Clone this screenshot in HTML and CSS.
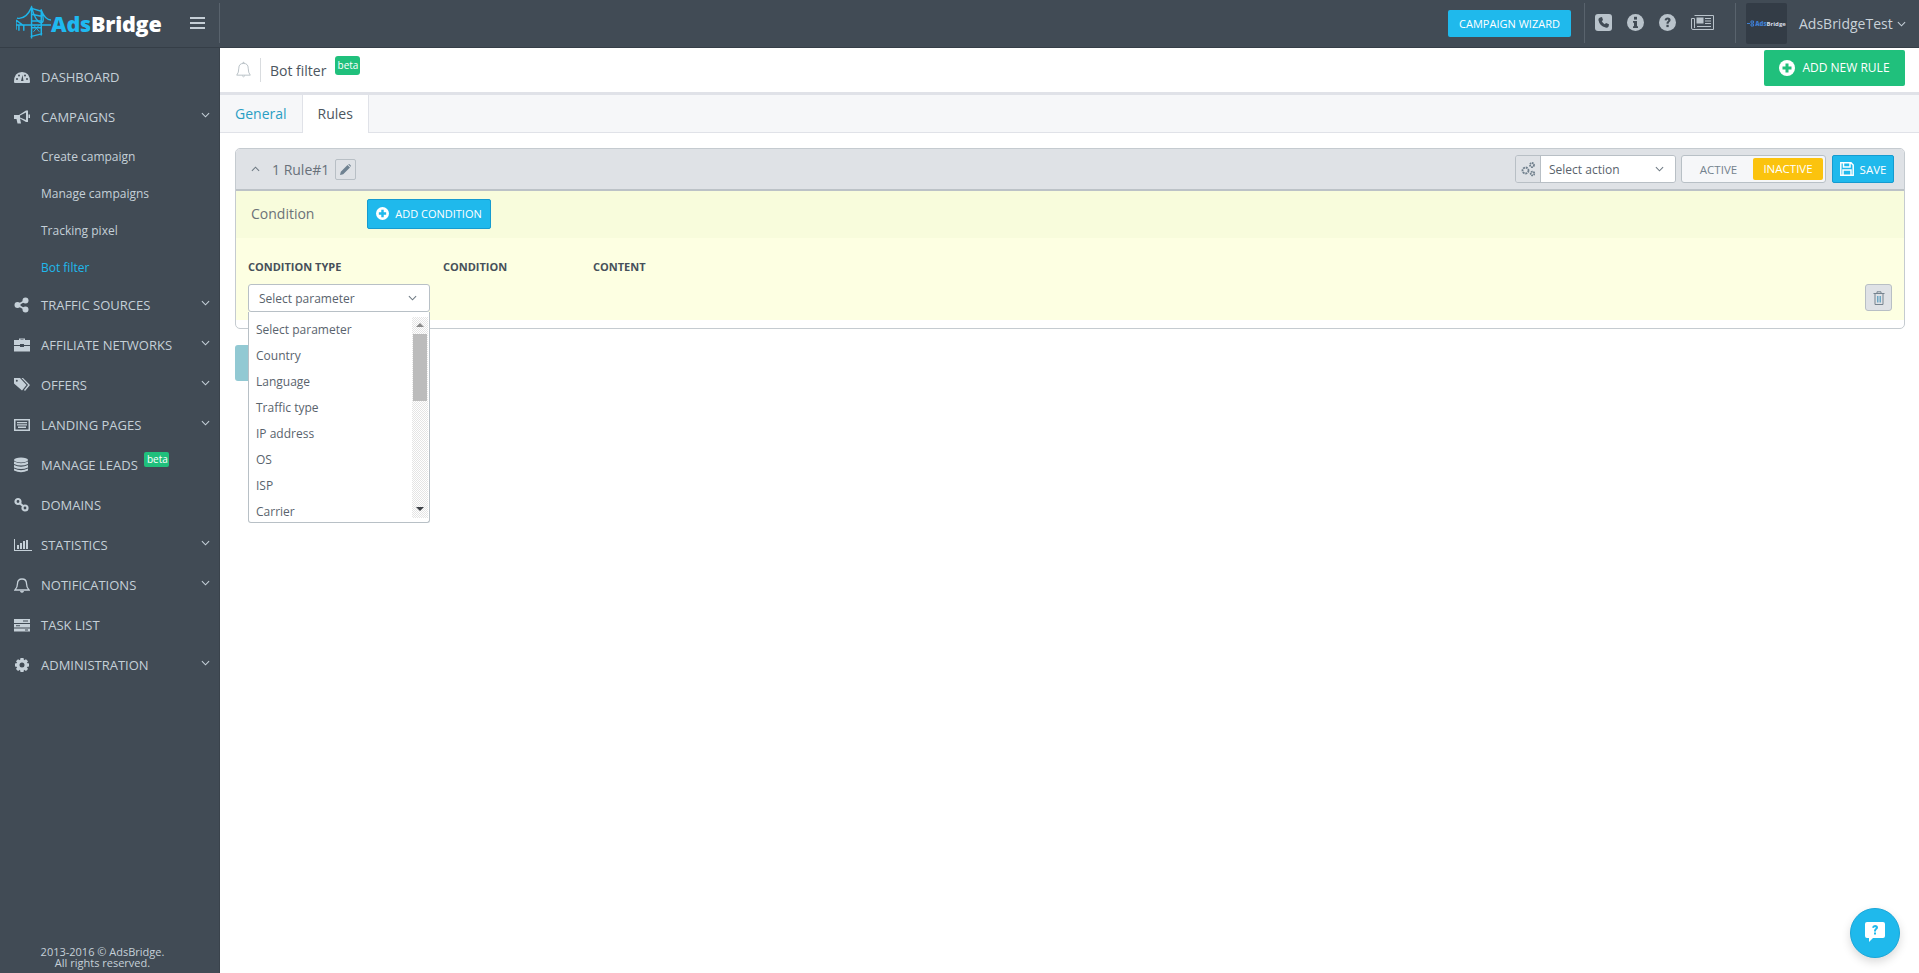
FILE: index.html
```html
<!DOCTYPE html>
<html lang="en">
<head>
<meta charset="utf-8">
<title>Bot filter - AdsBridge</title>
<link rel="stylesheet" href="styles.css">
</head>
<body>
<header class="topbar">
  <div class="logo">
    <svg class="logo-mark" viewBox="0 0 36 36" fill="none" stroke="#1fb5ea" stroke-width="1.5">
      <path d="M0 16 L8 22 M0 16 V26 M0 21 H36 M3 21 V27 M8 21 V27"/>
      <path d="M16 2 V35 M26 5 V32 M16 4 L26 7 M16 10 L26 12 M16 17 L26 17 M16 24 L26 24 M15 33 L27 30"/>
      <path d="M1 14 Q10 16 16 3 Q20 18 26 19 Q30 18 26 6 Q30 16 36 16"/>
      <path d="M18 21 L24 28 M24 21 L18 28" stroke-width="1"/>
    </svg>
    <span class="logo-text"><b class="logo-ads">Ads</b>Bridge</span>
  </div>
  <button class="burger" aria-label="menu"><i></i><i></i><i></i></button>
  <span class="top-sep first"></span>
  <span class="spacer"></span>
  <a class="wizard">CAMPAIGN WIZARD</a>
  <span class="top-sep"></span>
  <div class="top-icons">
    <svg width="17" height="17" viewBox="0 0 17 17"><rect width="17" height="17" rx="3" fill="#b9c3cb"/><path d="M5 3.4 L7 3 L8 6 L6.8 7.2 Q7.8 9.4 9.8 10.3 L11 9 L14 10.2 L13.6 12.4 Q12.6 14 10.6 13.6 Q4.6 12 3.4 6 Q3.2 4.2 5 3.4Z" fill="#414b55"/></svg>
    <svg width="17" height="17" viewBox="0 0 17 17"><circle cx="8.5" cy="8.5" r="8.5" fill="#b9c3cb"/><rect x="7" y="2.8" width="3" height="2.8" fill="#414b55"/><path d="M6 7 H10 V12.2 H11 V14 H6 V12.2 H7 V8.8 H6Z" fill="#414b55"/></svg>
    <svg width="17" height="17" viewBox="0 0 17 17"><circle cx="8.5" cy="8.5" r="8.5" fill="#b9c3cb"/><path d="M5.6 6.3 Q6 3.6 8.7 3.6 Q11.6 3.7 11.6 6.1 Q11.6 7.4 10.2 8.2 Q9.5 8.7 9.6 9.8 H7.5 Q7.3 8.1 8.6 7.2 Q9.5 6.6 9.3 6 Q9 5.4 8.4 5.5 Q7.8 5.6 7.6 6.6Z" fill="#414b55"/><rect x="7.4" y="10.8" width="2.3" height="2.3" fill="#414b55"/></svg>
    <svg width="23" height="15" viewBox="0 0 23 15" fill="none" stroke="#b9c3cb"><path d="M3.5 .5 H22.5 V14.5 H2 Q.5 14.500 .5 13 V3.500 H3.500 V13"/><rect x="6" y="3" width="6" height="5" fill="#b9c3cb"/><path d="M14 3.500 H20 M14 6 H20 M14 8.500 H20 M6 11.500 H20"/></svg>
  </div>
  <span class="top-sep"></span>
  <div class="avatar">
    <svg width="7" height="7" viewBox="0 0 7 7" fill="none" stroke="#3f7fd0"><path d="M0 3.500 H3 M4 1 H6.500 V3 H4Z M4 4 H6.500 V6 H4Z"/></svg>
    <span class="avatar-text"><b class="avatar-ads">Ads</b>Bridge</span>
  </div>
  <span class="user">AdsBridgeTest</span>
  <svg class="chev user-chev" viewBox="0 0 10 6"><path d="M1 1 L5 5 L9 1"/></svg>
</header>

<div class="layout">
  <nav class="sidebar">
    <ul class="menu">
      <li class="item"><svg class="ico" viewBox="0 0 16 16"><path d="M0 13 Q0 3 8 3 Q16 3 16 13 Q16 14 15 14 H1 Q0 14 0 13Z"/><g fill="#414b55"><circle cx="3" cy="10" r="1"/><circle cx="5" cy="6.500" r="1"/><circle cx="13" cy="10" r="1"/><circle cx="11" cy="6.500" r="1"/><path d="M7 12 L8.500 6 L9.500 12Z"/></g></svg><span>DASHBOARD</span></li>
      <li class="item open"><svg class="ico" viewBox="0 0 16 16"><path d="M0 6 H5 L12 1.500 H14 V13 H12 L6 9.500 L7 14.500 H3.500 L2.500 10 H0Z M14.500 5.500 H16 V9 H14.500Z"/><path d="M6 6.500 L12 3.500 V11 L6 8.500Z" fill="#414b55"/></svg><span>CAMPAIGNS</span><svg class="chev" viewBox="0 0 10 6"><path d="M1 1 L5 5 L9 1"/></svg></li>
      <li class="subs">
        <a class="sub">Create campaign</a>
        <a class="sub">Manage campaigns</a>
        <a class="sub">Tracking pixel</a>
        <a class="sub current">Bot filter</a>
      </li>
      <li class="item"><svg class="ico" viewBox="0 0 16 16"><circle cx="3.500" cy="8" r="3"/><circle cx="11.500" cy="3.500" r="3"/><circle cx="11.500" cy="12.500" r="3"/><path d="M3.500 8 L11.500 3.500 M3.500 8 L11.500 12.500" stroke="#c5d0d8" stroke-width="1.600"/></svg><span>TRAFFIC SOURCES</span><svg class="chev" viewBox="0 0 10 6"><path d="M1 1 L5 5 L9 1"/></svg></li>
      <li class="item"><svg class="ico" viewBox="0 0 16 16"><path d="M5 3 V1.500 H11 V3 H16 V8 H10 V7 H6 V8 H0 V3Z M6.500 3 H9.500 V2.500 H6.500Z M0 9 H6 V10 H10 V9 H16 V14.500 H0Z"/></svg><span>AFFILIATE NETWORKS</span><svg class="chev" viewBox="0 0 10 6"><path d="M1 1 L5 5 L9 1"/></svg></li>
      <li class="item"><svg class="ico" viewBox="0 0 16 16"><path d="M0 1 H6 L12.500 8 L8 13.500 L0 6.500Z M9 1 L16 8 L11 14 L10 13 L14 8 L7.500 1Z"/><circle cx="2.800" cy="3.800" r="1" fill="#414b55"/></svg><span>OFFERS</span><svg class="chev" viewBox="0 0 10 6"><path d="M1 1 L5 5 L9 1"/></svg></li>
      <li class="item"><svg class="ico" viewBox="0 0 16 16"><path fill-rule="evenodd" d="M0 2 H16 V14 H0Z M1.500 3.500 V12.500 H14.500 V3.500Z"/><path d="M3 5 H13 V6.200 H3Z M3 7.200 H13 V8.400 H3Z M4 9.500 H12 V11 H4Z"/></svg><span>LANDING PAGES</span><svg class="chev" viewBox="0 0 10 6"><path d="M1 1 L5 5 L9 1"/></svg></li>
      <li class="item"><svg class="ico" viewBox="0 0 16 16"><ellipse cx="7" cy="3" rx="7" ry="2.500"/><path d="M0 4.500 Q7 8 14 4.500 V7 Q7 10 0 7Z M0 8 Q7 11.500 14 8 V10.500 Q7 13.500 0 10.500Z M0 11.500 Q7 15 14 11.500 V13.500 Q7 17 0 13.500Z"/></svg><span>MANAGE LEADS</span><em class="beta side-beta">beta</em></li>
      <li class="item"><svg class="ico line thick" viewBox="0 0 16 16"><circle cx="4" cy="4.500" r="2.500"/><circle cx="11" cy="11" r="2.500"/><path d="M6 6.500 L9 9"/></svg><span>DOMAINS</span></li>
      <li class="item"><svg class="ico wide" viewBox="0 0 18 16"><path d="M0 2 H1 V13 H18 V14 H0Z M3 8 H5 V12 H3Z M6 6 H8 V12 H6Z M9 4 H11 V12 H9Z M12 3 H14 V12 H12Z"/></svg><span>STATISTICS</span><svg class="chev" viewBox="0 0 10 6"><path d="M1 1 L5 5 L9 1"/></svg></li>
      <li class="item"><svg class="ico line" viewBox="0 0 16 16"><path d="M1 13 Q3.500 10.500 3.500 6.500 Q3.500 2 8 2 Q12.500 2 12.500 6.500 Q12.500 10.500 15 13Z"/><path d="M6.500 14 Q8 16 9.500 14"/></svg><span>NOTIFICATIONS</span><svg class="chev" viewBox="0 0 10 6"><path d="M1 1 L5 5 L9 1"/></svg></li>
      <li class="item"><svg class="ico" viewBox="0 0 16 16"><path d="M0 2 H16 V6 H0Z M0 7 H16 V10.500 H0Z M0 11.500 H16 V14.500 H0Z"/><path d="M9 3.500 H14 V4.500 H9Z M2 8.200 H6 V9.200 H2Z M11 12.500 H14 V13.500 H11Z" fill="#414b55"/></svg><span>TASK LIST</span></li>
      <li class="item"><svg class="ico" viewBox="0 0 16 16"><path fill-rule="evenodd" d="M6.500 1 H9.500 L10 3.200 L12 2.200 L14 4.200 L12.800 6 L15 6.500 V9.500 L12.800 10 L14 12 L12 14 L10 12.800 L9.500 15 H6.500 L6 12.800 L4 14 L2 12 L3.200 10 L1 9.500 V6.500 L3.200 6 L2 4.200 L4 2.200 L6 3.200Z M8 5.500 A2.500 2.500 0 1 0 8 10.500 A2.500 2.500 0 1 0 8 5.500Z"/></svg><span>ADMINISTRATION</span><svg class="chev" viewBox="0 0 10 6"><path d="M1 1 L5 5 L9 1"/></svg></li>
    </ul>
    <p class="copy">2013-2016 © AdsBridge.<br>All rights reserved.</p>
  </nav>

  <main class="main">
    <div class="pagehead">
      <svg class="head-bell" viewBox="0 0 16 18" fill="none" stroke="#b6bfc4"><path d="M.8 14.500 Q3 12 3 7 Q3 2 8 2 Q13 2 13 7 Q13 12 15.200 14.500Z"/><path d="M6.500 15 Q8 17.500 9.500 15 M7.500 2 V.8 H8.500 V2"/></svg>
      <span class="head-sep"></span>
      <h1 class="title">Bot filter</h1>
      <em class="beta head-beta">beta</em>
      <span class="spacer"></span>
      <a class="btn-add"><svg width="16" height="16" viewBox="0 0 16 16"><circle cx="8" cy="8" r="8" fill="#fff"/><path d="M6.500 3.500 H9.500 V6.500 H12.500 V9.500 H9.500 V12.500 H6.500 V9.500 H3.500 V6.500 H6.500Z" fill="#20c07c"/></svg>ADD NEW RULE</a>
    </div>
    <div class="tabs">
      <a class="tab">General</a>
      <a class="tab active">Rules</a>
    </div>
    <section class="content">
      <div class="rule">
        <div class="rule-head">
          <svg class="chev rule-chev" viewBox="0 0 10 6"><path d="M1 5 L5 1 L9 5"/></svg>
          <span class="rule-name">1 Rule#1</span>
          <span class="edit"><svg width="11" height="11" viewBox="0 0 11 11"><path d="M0 11 L.8 7.800 L7.500 1 L10 3.500 L3.200 10.200Z M8.200 .4 Q9 -.2 9.800 .4 L10.600 1.200 Q11.200 2 10.600 2.800 Z" fill="#6f8291"/></svg></span>
          <span class="spacer"></span>
          <div class="action">
            <span class="action-ico"><svg width="16" height="16" viewBox="0 0 16 16" fill="none" stroke="#6f7f8c" stroke-width="1.800"><circle cx="5.500" cy="9.500" r="3" stroke-dasharray="2 .8"/><circle cx="12" cy="4" r="2" stroke-dasharray="1.500 .6"/><circle cx="12.500" cy="12.500" r="1.800" stroke-dasharray="1.500 .6"/></svg></span>
            <span class="action-select">Select action<svg class="chev dark" viewBox="0 0 10 6"><path d="M1 1 L5 5 L9 1"/></svg></span>
          </div>
          <div class="toggle"><span class="t-off">ACTIVE</span><span class="t-on">INACTIVE</span></div>
          <a class="btn-save"><svg width="14" height="14" viewBox="0 0 14 14" fill="none" stroke="#fff" stroke-width="1.500"><path d="M.8 .8 H11 L13.200 3 V13.200 H.8Z M3.500 1 V5 H10 V1 M3 13 V8 H11 V13"/></svg>SAVE</a>
        </div>
        <div class="cond-bar">
          <span class="cond-label">Condition</span>
          <a class="btn-cond"><svg width="13" height="13" viewBox="0 0 16 16"><circle cx="8" cy="8" r="8" fill="#fff"/><path d="M6.500 3.500 H9.500 V6.500 H12.500 V9.500 H9.500 V12.500 H6.500 V9.500 H3.500 V6.500 H6.500Z" fill="#1fb9ec"/></svg>ADD CONDITION</a>
        </div>
        <div class="cond-table">
          <div class="cond-cols"><b class="col-a">CONDITION TYPE</b><b class="col-b">CONDITION</b><b class="col-c">CONTENT</b></div>
          <div class="cond-row">
            <div class="param">
              <span class="param-select">Select parameter<svg class="chev dark" viewBox="0 0 10 6"><path d="M1 1 L5 5 L9 1"/></svg></span>
              <div class="drop">
                <ul class="drop-list">
                  <li>Select parameter</li><li>Country</li><li>Language</li><li>Traffic type</li><li>IP address</li><li>OS</li><li>ISP</li><li>Carrier</li>
                </ul>
                <div class="scroll">
                  <span class="arrow up"></span>
                  <span class="thumb"></span>
                  <span class="track"></span>
                  <span class="arrow down"></span>
                </div>
              </div>
            </div>
            <span class="spacer"></span>
            <span class="trash"><svg width="12" height="14" viewBox="0 0 12 14" fill="none" stroke="#76838e"><path d="M.500 2.500 H11.500 M2 2.500 V13.500 H10 V2.500 M4 2.500 V.8 H8 V2.500"/><path d="M4.500 5 V11.500 M6 5 V11.500 M7.500 5 V11.500" stroke="#6ca7c4"/></svg></span>
          </div>
        </div>
      </div>
      <a class="btn-hidden"></a>
    </section>
  </main>
</div>
<a class="help"><svg width="22" height="24" viewBox="0 0 22 24"><path d="M3 1 H19 Q21 1 21 3 V15 Q21 17 19 17 H9 L5 21 V17 H3 Q1 17 1 15 V3 Q1 1 3 1Z" fill="#fff"/><path d="M8 6.500 Q8.500 4 11 4 Q14 4 14 6.500 Q14 8 12.500 8.800 Q11.900 9.200 12 10.500 H10 Q9.800 8.500 11.200 7.600 Q12 7 11.800 6.500 Q11.500 5.900 11 6 Q10.300 6.100 10 7Z M10 11.500 H12 V13.500 H10Z" fill="#1fb9ec"/></svg></a>
</body>
</html>
```
FILE: styles.css
```css
* { box-sizing: border-box; }
html, body { height: 100%; }
body {
  margin: 0;
  overflow: hidden;
  display: flex;
  flex-direction: column;
  background: #fff;
  font-family: "Open Sans", "Liberation Sans", sans-serif;
  font-size: 13px;
  color: #4c5660;
}
ul { list-style: none; margin: 0; padding: 0; }
a { cursor: pointer; text-decoration: none; }
.spacer { flex: 1; }
.chev { width: 9px; height: 6px; fill: none; stroke: #c5d0d8; stroke-width: 1.2; flex: none; }
.chev.dark { stroke: #6f7a84; }

/* top bar */
.topbar {
  height: 48px;
  flex: none;
  display: flex;
  align-items: center;
  background: #414b55;
  border-bottom: 1px solid #353e47;
  padding-right: 13px;
}
.logo { width: 190px; display: flex; align-items: center; padding-left: 16px; }
.logo-mark { width: 35px; height: 36px; flex: none; margin-bottom: 3px; }
.logo-text { font-size: 21.500px; font-weight: 800; color: #fff; letter-spacing: -.2px; }
.logo-ads { color: #1fb9f0; font-weight: 800; }
.burger { width: 15px; height: 12px; margin: 0 0 2px 0; padding: 0; border: 0; background: none; display: flex; flex-direction: column; justify-content: space-between; }
.burger i { display: block; height: 2px; background: #c5ced6; }
.top-sep { width: 1px; height: 40px; background: #59636d; flex: none; margin-bottom: 1px; }
.top-sep.first { margin-left: 14px; }
.wizard { width: 123px; height: 27px; line-height: 27px; text-align: center; background: #1fb9ec; color: #fff; font-size: 11px; border-radius: 2px; margin: 0 13px 0 0; }
.top-icons { display: flex; align-items: center; width: 150px; padding-left: 10px; gap: 15px; margin-bottom: 2px; }
.top-icons svg { flex: none; }
.avatar { width: 41px; height: 41px; margin: 0 12px 0 10px; background: #333c46; display: flex; align-items: center; justify-content: center; gap: 1px; border-radius: 2px; }
.avatar-text { font-size: 6px; color: #d6dde6; font-weight: 700; }
.avatar-ads { color: #3f7fd0; }
.user { color: #c9d2d9; font-size: 14px; width: 98px; margin-bottom: 1px; }
.user-chev { margin-bottom: 0; }

/* layout */
.layout { flex: 1; min-height: 0; display: flex; }
.sidebar { width: 220px; flex: none; background: #414b55; display: flex; flex-direction: column; padding-top: 9px; border-right: 1px solid #3a434c; }
.menu { flex: 1; }
.item { height: 40px; display: flex; align-items: center; padding-left: 14px; color: #c5d0d8; font-size: 13px; position: relative; }
.item > span { flex: 1; }
.ico { width: 16px; height: 16px; margin-right: 11px; fill: #c5d0d8; flex: none; }
.ico.wide { width: 18px; margin-right: 9px; }
.ico.line { fill: none; stroke: #c5d0d8; stroke-width: 1.3; }
.ico.line.thick { stroke-width: 2.2; }
.item .chev { margin-right: 9px; margin-bottom: 4px; }
.subs { height: 148px; padding-top: 1px; }
.sub { display: block; height: 37px; line-height: 37px; padding-left: 41px; color: #c5d0d8; font-size: 12px; }
.sub.current { color: #1fb9ec; }
.beta { font-style: normal; background: #20c07c; color: #fff; font-size: 10px; line-height: 15px; height: 15px; border-radius: 2px; padding: 0 3px; text-align: center; }
.side-beta { position: absolute; left: 144px; top: 7px; width: 25px; }
.copy { margin: 0 0 5px; padding-right: 14px; text-align: center; font-size: 11px; line-height: 11px; color: #c5d0d8; }

/* main */
.main { flex: 1; min-width: 0; display: flex; flex-direction: column; }
.pagehead { height: 47px; flex: none; display: flex; align-items: center; background: #fff; border-bottom: 3px solid #e0e2e8; padding: 0 14px 0 16px; }
.head-bell { width: 15px; height: 18px; }
.head-sep { width: 1px; height: 24px; background: #d9dcdf; margin: 0 9px 0 9px; }
.title { margin: 0; font-size: 14px; font-weight: 400; color: #4c5660; }
.head-beta { width: 25px; height: 19px; line-height: 18px; margin: -9px 0 0 9px; padding: 0; border-radius: 3px; }
.btn-add { width: 141px; height: 36px; display: flex; align-items: center; justify-content: center; gap: 7px; background: #20c07c; color: #fff; font-size: 12px; border-radius: 2px; margin-top: -5px; }
.tabs { height: 38px; flex: none; display: flex; background: #f6f7f9; border-bottom: 1px solid #e0e2e8; }
.tab { padding: 0 15px; line-height: 37px; font-size: 14px; color: #2a9ec4; }
.tab.active { height: 38px; background: #fff; color: #4c5660; border: 1px solid #e0e2e8; border-width: 0 1px; }
.content { padding: 15px 14px 0 15px; }

/* rule */
.rule { height: 181px; border: 1px solid #c5cbd0; border-radius: 5px; overflow: visible; position: relative; }
.rule-head { height: 42px; display: flex; align-items: center; background: #dfe2e6; border-bottom: 2px solid #bcc2c7; border-radius: 4px 4px 0 0; padding: 0 10px 0 15px; }
.rule-chev { margin-right: 12px; stroke: #6f7a84; }
.rule-name { font-size: 14px; color: #69717a; }
.edit { width: 21px; height: 21px; margin-left: 6px; border: 1px solid #b8bfc5; border-radius: 2px; display: flex; align-items: center; justify-content: center; }
.action { display: flex; height: 28px; border: 1px solid #b8bfc5; border-radius: 3px; overflow: hidden; margin-right: 5px; }
.action-ico { width: 25px; display: flex; align-items: center; justify-content: center; background: #dfe2e6; border-right: 1px solid #b8bfc5; }
.action-select { width: 134px; background: #fff; display: flex; align-items: center; justify-content: space-between; padding: 0 11px 0 8px; font-size: 12px; color: #59636d; }
.toggle { width: 145px; height: 28px; display: flex; align-items: center; padding: 2px; background: #f6f7f9; border: 1px solid #b8c0c6; border-radius: 3px; margin-right: 6px; font-size: 11.500px; }
.t-off { flex: 1; text-align: center; color: #73828e; }
.t-on { width: 70px; height: 22px; line-height: 22px; text-align: center; background: #fbc30e; color: #fff; border-radius: 2px; }
.btn-save { width: 62px; height: 28px; display: flex; align-items: center; justify-content: center; gap: 6px; background: #1fb9ec; color: #fff; border: 1px solid #159bd0; border-radius: 2px; font-size: 11.500px; }
.cond-bar { height: 47px; display: flex; align-items: center; background: #f8fcdc; padding: 0 0 2px 15px; }
.cond-label { width: 116px; font-size: 14px; color: #6b7278; }
.btn-cond { width: 124px; height: 30px; display: flex; align-items: center; justify-content: center; gap: 6px; background: #1fb9ec; color: #fff; border: 1px solid #159bd0; border-radius: 2px; font-size: 11px; }
.cond-table { height: 82px; background: #fdffe2; padding: 21px 12px 0 12px; }
.cond-cols { display: flex; height: 25px; font-size: 11px; color: #46505a; }
.col-a { width: 195px; }
.col-b { width: 150px; }
.cond-row { display: flex; align-items: flex-start; }
.param { width: 182px; position: relative; }
.param-select { height: 28px; display: flex; align-items: center; justify-content: space-between; padding: 0 12px 0 10px; background: #fff; border: 1px solid #b8c0c6; border-radius: 3px; font-size: 12px; color: #59636d; }
.drop { position: absolute; left: 0; top: 28px; width: 182px; height: 211px; display: flex; background: #fff; border: 1px solid #b8c0c6; border-top: 0; border-radius: 0 0 3px 3px; z-index: 5; }
.drop-list { flex: 1; padding-top: 5px; font-size: 12px; color: #59636d; }
.drop-list li { height: 26px; line-height: 26px; padding-left: 7px; }
.scroll { width: 16px; margin: 5px 1px 4px 0; display: flex; flex-direction: column; background: repeating-conic-gradient(#e4e4e4 0 25%, #fff 0 50%) 0 0 / 2px 2px; }
.arrow { height: 17px; flex: none; position: relative; }
.arrow::after { content: ""; position: absolute; left: 4px; border: 4px solid transparent; }
.arrow.up::after { top: 2px; border-bottom: 4px solid #8a8a8a; }
.arrow.down::after { top: 6px; border-top: 4px solid #3c4046; }
.thumb { height: 67px; flex: none; margin: 0 1px; background: #bcbcbc; }
.track { flex: 1; }
.trash { width: 27px; height: 27px; display: flex; align-items: center; justify-content: center; background: #dfe2e6; border: 1px solid #b8bfc5; border-radius: 3px; }
.btn-hidden { display: block; width: 150px; height: 36px; margin-top: 16px; background: #92c9d3; border-radius: 3px; }
.help { position: absolute; right: 19px; bottom: 15px; width: 50px; height: 50px; border-radius: 50%; background: #1fb9ec; border: 1px solid #1aa6d8; box-shadow: 0 4px 10px rgba(0,0,0,.15); display: flex; align-items: center; justify-content: center; }
```
